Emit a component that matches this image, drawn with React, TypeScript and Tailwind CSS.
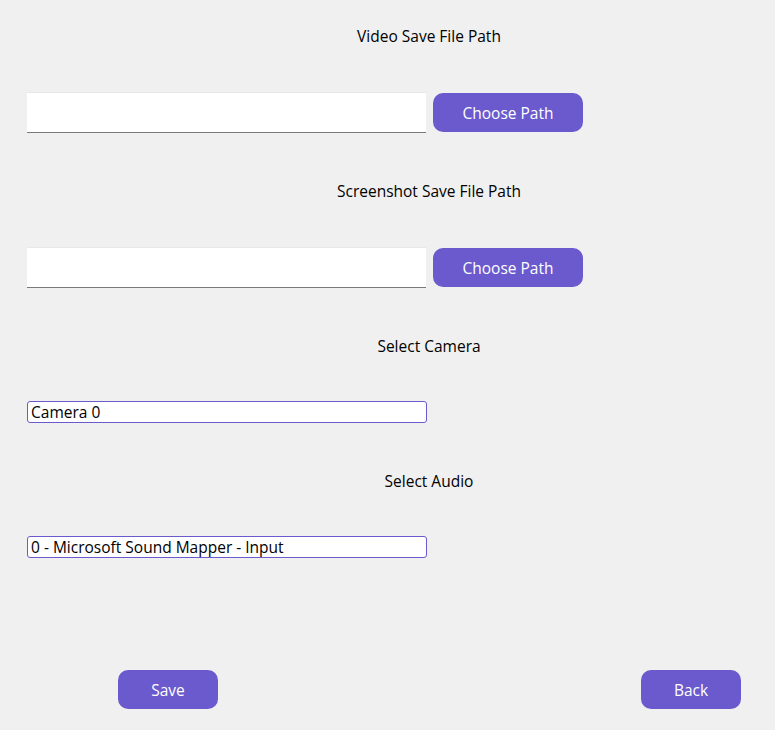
const font = { fontFamily: '"Open Sans", "DejaVu Sans", sans-serif' };

function PathRow() {
  return (
    <div className="flex items-center gap-[7px] pl-[27px]">
      <div className="h-[41px] w-[399px] border-t border-b border-t-[#e8e8e8] border-b-[#7a7a7a] bg-white" />
      <button className="h-[39px] w-[150px] rounded-[10px] bg-[#6a5acd] pt-[2px] text-[15.5px] text-white">
        Choose Path
      </button>
    </div>
  );
}

function Label({ text }: { text: string }) {
  return <div className="pl-[83px] text-center text-[15.5px] leading-[20px] text-black">{text}</div>;
}

function Combo({ value }: { value: string }) {
  return (
    <div className="ml-[27px] flex h-[22px] w-[400px] items-center rounded-[3px] border border-[#6a5acd] bg-white pt-[2px] pl-[3px] text-[15.5px] text-black">
      {value}
    </div>
  );
}

export default function App() {
  return (
    <div className="flex h-[730px] w-[775px] flex-col bg-[#f0f0f0]" style={font}>
      <div className="mt-[26px]">
        <Label text="Video Save File Path" />
      </div>
      <div className="mt-[46px]">
        <PathRow />
      </div>
      <div className="mt-[48px]">
        <Label text="Screenshot Save File Path" />
      </div>
      <div className="mt-[46px]">
        <PathRow />
      </div>
      <div className="mt-[48px]">
        <Label text="Select Camera" />
      </div>
      <div className="mt-[45px]">
        <Combo value="Camera 0" />
      </div>
      <div className="mt-[48px]">
        <Label text="Select Audio" />
      </div>
      <div className="mt-[45px]">
        <Combo value="0 - Microsoft Sound Mapper - Input" />
      </div>
      <div className="mt-auto mb-[21px] flex justify-between pl-[118px] pr-[34px]">
        <button className="h-[39px] w-[100px] rounded-[10px] bg-[#6a5acd] pt-[2px] text-[15.5px] text-white">Save</button>
        <button className="h-[39px] w-[100px] rounded-[10px] bg-[#6a5acd] pt-[2px] text-[15.5px] text-white">Back</button>
      </div>
    </div>
  );
}
